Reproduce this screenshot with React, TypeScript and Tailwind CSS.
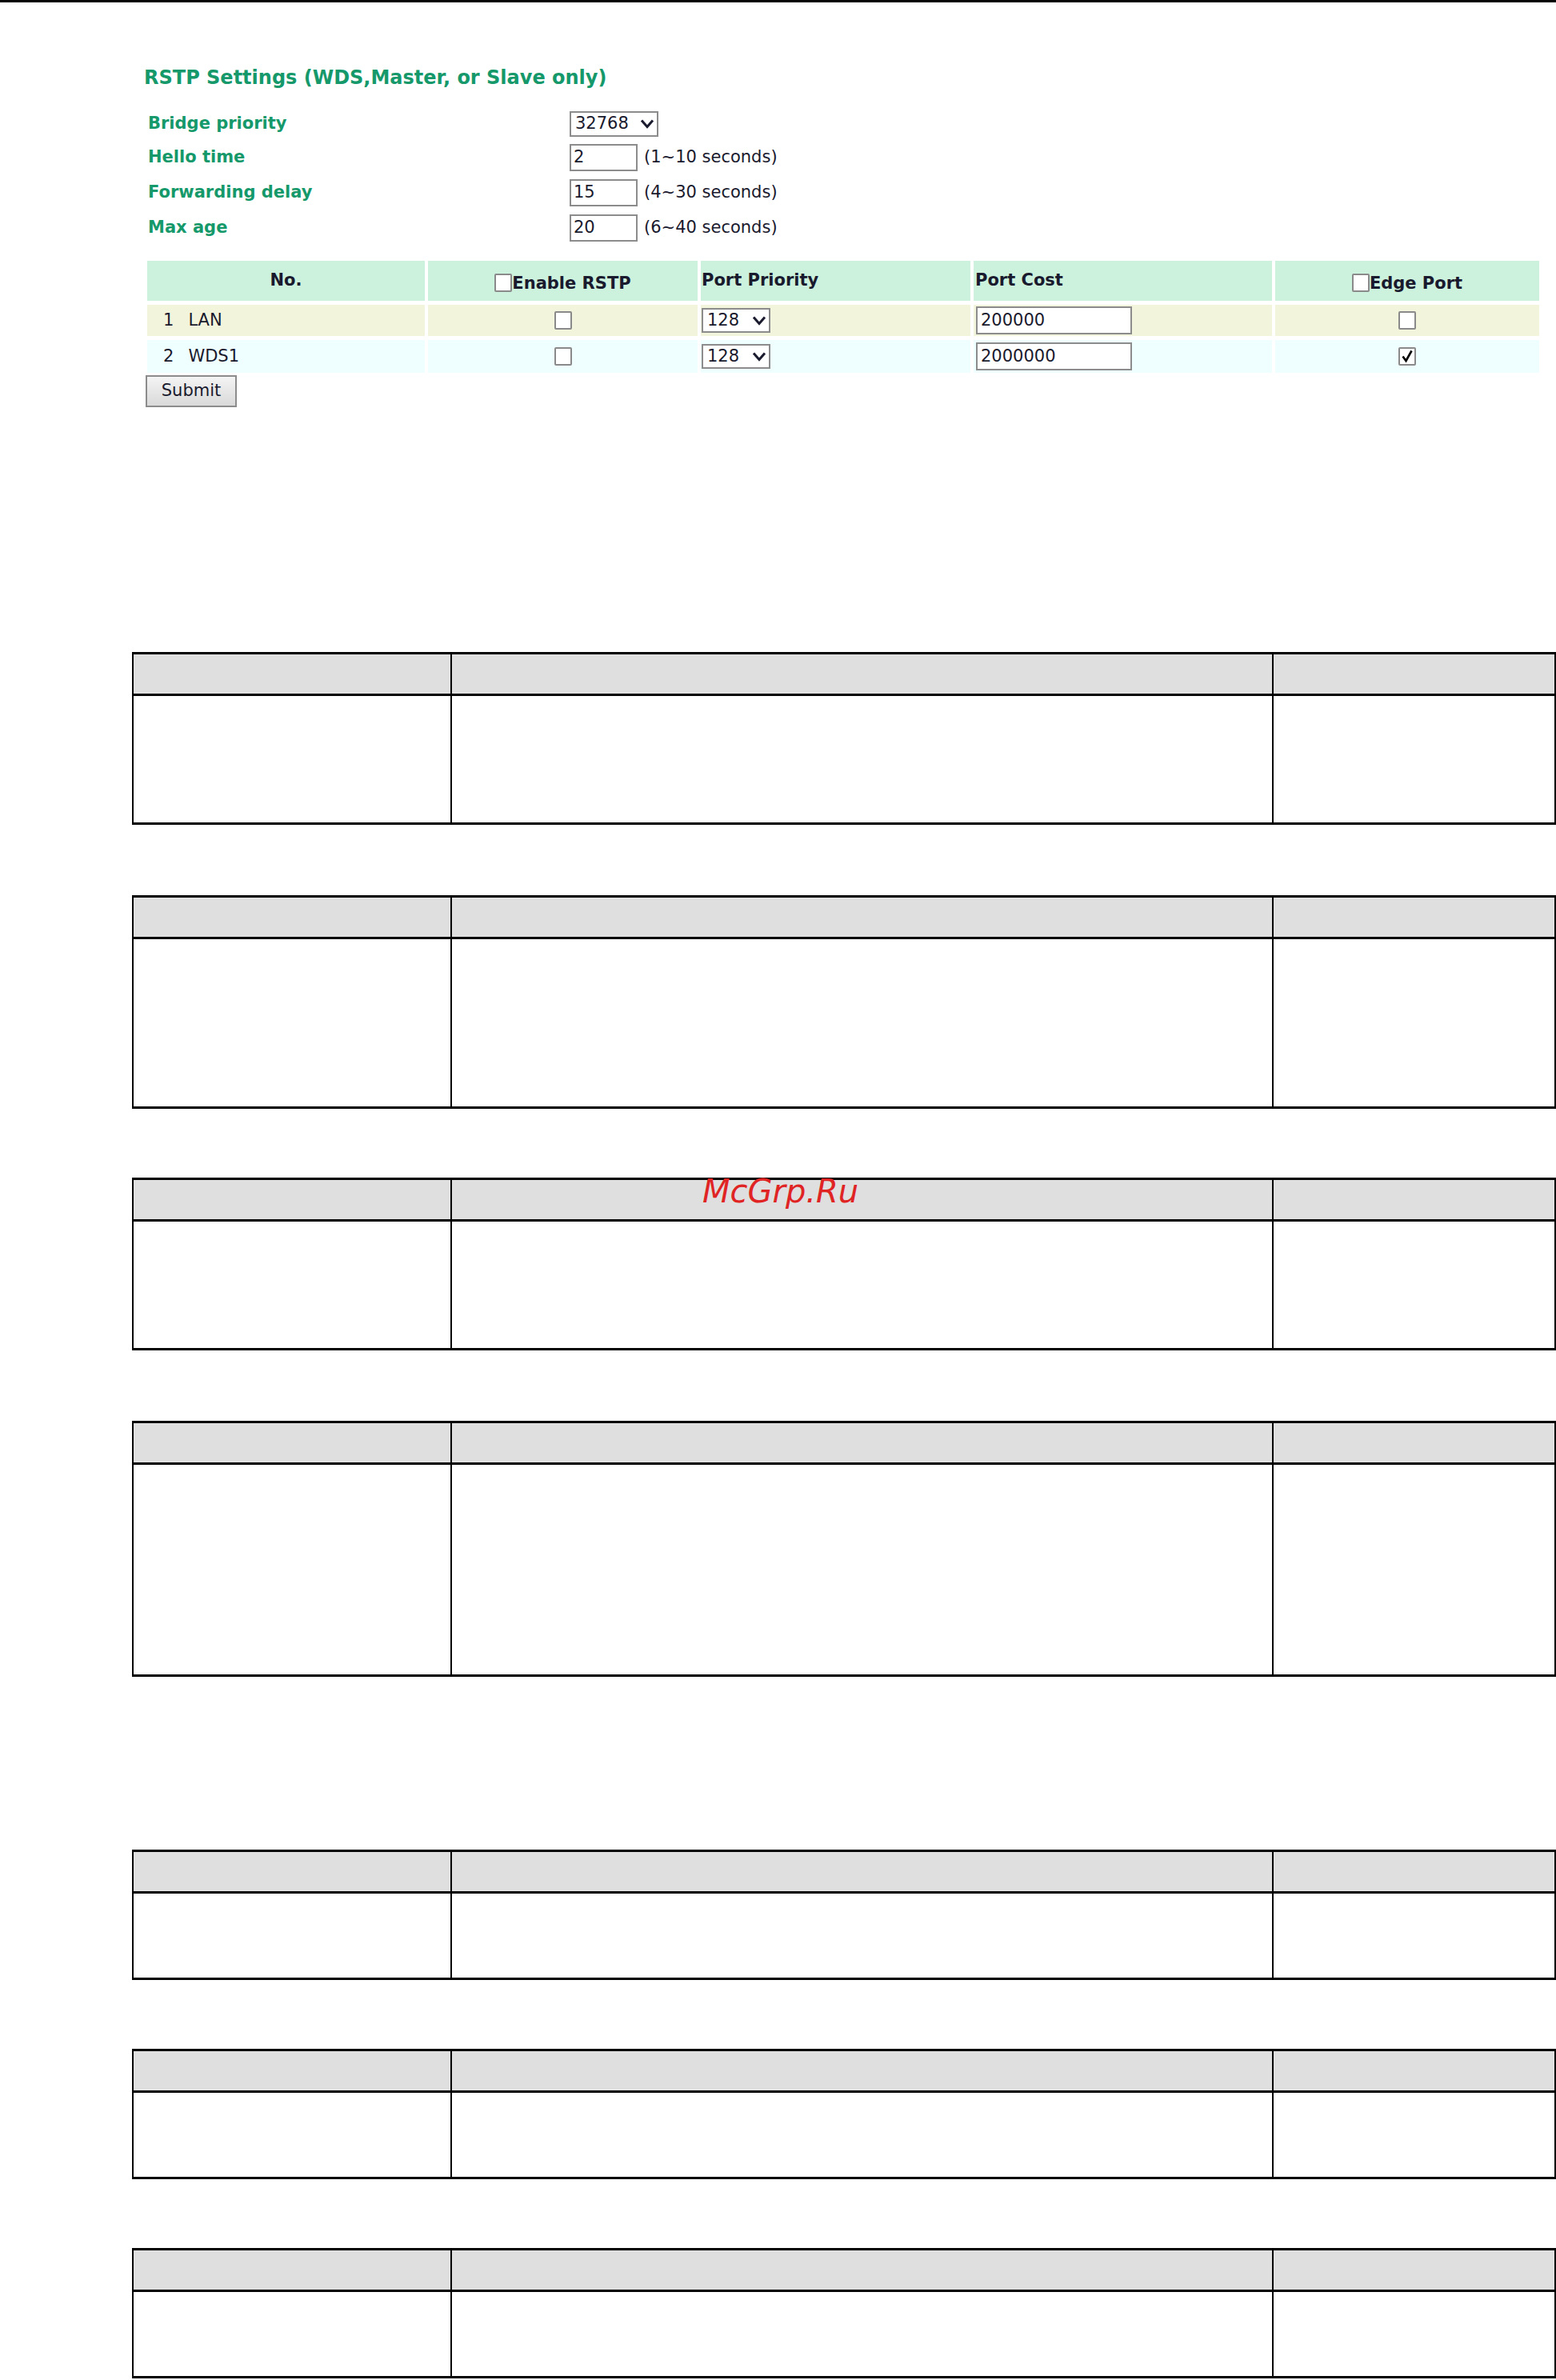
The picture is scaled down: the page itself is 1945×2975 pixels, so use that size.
import React from 'react';

const font = { fontFamily: '"DejaVu Sans", Verdana, sans-serif' };

function Chevron() {
  return (
    <svg width="18" height="13" viewBox="0 0 18 13" className="shrink-0">
      <path d="M2 2.5 L9 10.5 L16 2.5" fill="none" stroke="#1a1a2e" strokeWidth="3" strokeLinejoin="miter" />
    </svg>
  );
}

function FakeSelect({ value, className }: { value: string; className: string }) {
  return (
    <div className={`flex items-center justify-between bg-white border-2 border-[#8c8c8c] pl-[5px] pr-[3px] text-[21px] text-[#1a1a2e] ${className}`}>
      <span>{value}</span>
      <Chevron />
    </div>
  );
}

function TextBox({ value, className }: { value: string; className: string }) {
  return (
    <div className={`flex items-center bg-white border-2 border-[#8c8c8c] pl-[3px] text-[21px] text-[#1a1a2e] ${className}`}>
      {value}
    </div>
  );
}

function Check({ checked = false }: { checked?: boolean }) {
  return (
    <div className="relative w-[22px] h-[23px] bg-white border-2 border-[#8a8a8a] rounded-[2px] shrink-0">
      {checked && (
        <svg width="18" height="19" viewBox="0 0 18 19" className="absolute left-0 top-0">
          <path d="M3.5 9.5 L7.5 15 L14.5 2.5" fill="none" stroke="#000" strokeWidth="2.6" />
        </svg>
      )}
    </div>
  );
}

const settings = [
  { label: 'Bridge priority', h: 'h-[41px]' },
  { label: 'Hello time', value: '2', hint: '(1~10 seconds)', h: 'h-[44px]' },
  { label: 'Forwarding delay', value: '15', hint: '(4~30 seconds)', h: 'h-[44px]' },
  { label: 'Max age', value: '20', hint: '(6~40 seconds)', h: 'h-[44px]' },
];

const ports = [
  { no: '1', name: 'LAN', cost: '200000', edge: false, bg: 'bg-[#f3f4dc]', h: 'h-[39px]' },
  { no: '2', name: 'WDS1', cost: '2000000', edge: true, bg: 'bg-[#effefe]', h: 'h-[41px]' },
];

function DescTable({ body }: { body: string }) {
  return (
    <div className="w-[1780px] border-l-2 border-r-2 border-black">
      <div className="grid grid-cols-[396px_1027px_1fr] h-[55px] bg-[#dfdfdf] border-t-[3px] border-b-[3px] border-black">
        <div />
        <div className="border-l-2 border-black" />
        <div className="border-l-2 border-black" />
      </div>
      <div className={`grid grid-cols-[396px_1027px_1fr] border-b-[3px] border-black ${body}`}>
        <div />
        <div className="border-l-2 border-black" />
        <div className="border-l-2 border-black" />
      </div>
    </div>
  );
}

export default function App() {
  return (
    <div className="relative w-[1945px] h-[2975px] overflow-hidden bg-white text-[#1a1a2e]" style={font}>
      <div className="h-[3px] bg-black" />

      <section className="pl-[180px]">
        <h1 className="mt-[80px] text-[24px] leading-[28px] font-bold text-[#15996b]">
          RSTP Settings (WDS,Master, or Slave only)
        </h1>

        <div className="mt-[23px] flex flex-col">
          {settings.map((s, i) => (
            <div key={s.label} className={`flex items-center ${s.h}`}>
              <div className="w-[532px] pl-[5px] text-[21px] font-bold text-[#15996b]">{s.label}</div>
              {i === 0 ? (
                <FakeSelect value="32768" className="w-[111px] h-[32px]" />
              ) : (
                <>
                  <TextBox value={s.value!} className="w-[85px] h-[34px]" />
                  <span className="ml-[8px] text-[21px]">{s.hint}</span>
                </>
              )}
            </div>
          ))}
        </div>

        {/* port table */}
        <div className="mt-[19px] ml-[4px] grid grid-cols-[347px_337px_337px_373px_330px] gap-x-[4px] gap-y-[5px] text-[21px]">
          <div className="h-[50px] bg-[#ccf2dd] flex items-center justify-center font-bold">No.</div>
          <div className="h-[50px] bg-[#ccf2dd] flex items-end justify-center pb-[11px] font-bold">
            <Check />
            <span className="leading-none">Enable RSTP</span>
          </div>
          <div className="h-[50px] bg-[#ccf2dd] flex items-center pl-[1px] font-bold">Port Priority</div>
          <div className="h-[50px] bg-[#ccf2dd] flex items-center pl-[2px] font-bold">Port Cost</div>
          <div className="h-[50px] bg-[#ccf2dd] flex items-end justify-center pb-[11px] font-bold">
            <Check />
            <span className="leading-none">Edge Port</span>
          </div>

          {ports.map((p) => (
            <React.Fragment key={p.no}>
              <div className={`${p.h} ${p.bg} flex items-center pl-[20px]`}>
                <span>{p.no}</span>
                <span className="ml-[18px]">{p.name}</span>
              </div>
              <div className={`${p.h} ${p.bg} flex items-center justify-center`}>
                <Check />
              </div>
              <div className={`${p.h} ${p.bg} flex items-center pl-[1px]`}>
                <FakeSelect value="128" className="w-[86px] h-[31px]" />
              </div>
              <div className={`${p.h} ${p.bg} flex items-center pl-[3px]`}>
                <TextBox value={p.cost} className="w-[195px] h-[35px] pl-[4px]" />
              </div>
              <div className={`${p.h} ${p.bg} flex items-center justify-center`}>
                <Check checked={p.edge} />
              </div>
            </React.Fragment>
          ))}
        </div>

        <button className="mt-[3px] ml-[2px] w-[114px] h-[40px] border-2 border-[#8c8c8c] bg-gradient-to-b from-[#f4f4f4] to-[#d9d9d9] text-[21px] text-[#1a1a2e]">
          Submit
        </button>
      </section>

      <div className="pl-[165px] flex flex-col">
        <div className="mt-[306px]"><DescTable body="h-[161px]" /></div>
        <div className="mt-[88px]"><DescTable body="h-[212px]" /></div>
        <div className="mt-[86px]"><DescTable body="h-[161px]" /></div>
        <div className="mt-[88px]"><DescTable body="h-[265px]" /></div>
        <div className="mt-[216px]"><DescTable body="h-[108px]" /></div>
        <div className="mt-[86px]"><DescTable body="h-[108px]" /></div>
        <div className="mt-[86px]"><DescTable body="h-[108px]" /></div>
      </div>

      <div className="absolute left-[878px] top-[1469px] text-[40px] leading-none italic text-[#e02424]">
        McGrp.Ru
      </div>
    </div>
  );
}
